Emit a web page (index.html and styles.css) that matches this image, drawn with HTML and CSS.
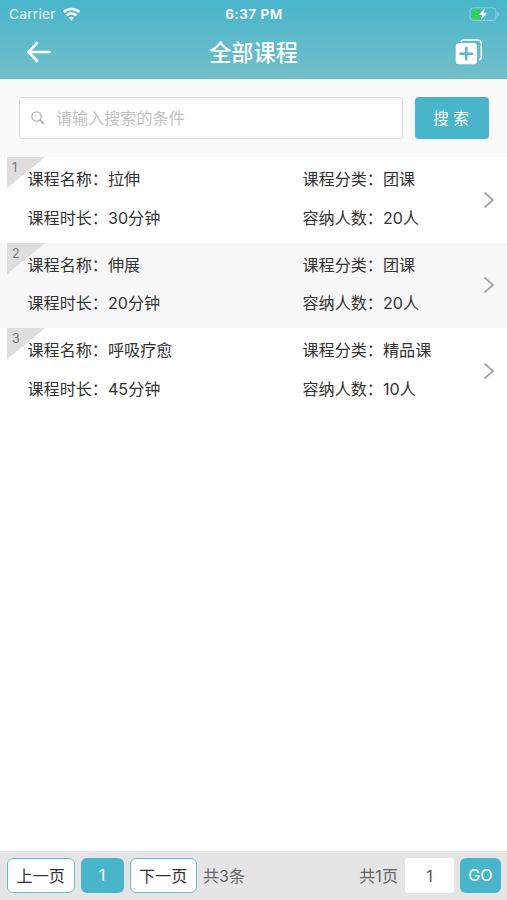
FILE: index.html
```html
<!DOCTYPE html>
<html lang="zh-CN">
<head>
    <meta charset="UTF-8">
    <meta name="viewport" content="width=device-width, initial-scale=1.0">
    <title>全部课程</title>
    <link rel="stylesheet" href="styles.css">
</head>
<body>
    <header class="header">
        <div class="status-bar">
            <div class="carrier">
                <span>Carrier</span>
                <svg width="19" height="14" viewBox="0 0 18 14" fill="none" stroke="#fff" stroke-width="2.5">
                    <path d="M1 5.2C5.5 .8 12.5 .8 17 5.2"/>
                    <path d="M4 8.4C6.8 5.7 11.2 5.7 14 8.4"/>
                    <path d="M6.3 10.8C7.8 9.4 10.2 9.4 11.7 10.8L9 13.6Z" fill="#fff" stroke="none"/>
                </svg>
            </div>
            <div class="time">6:37 PM</div>
            <svg class="battery" width="30" height="14" viewBox="0 0 30 14">
                <rect x="1" y=".8" width="26" height="12.6" rx="3.4" fill="none" stroke="#8dcfdc"/>
                <path d="M4.5 2.3H12V12H4.5Q2.5 12 2.5 10V4.3Q2.5 2.3 4.5 2.3Z" fill="#30d158"/>
                <path d="M28.5 5V9.4Q30 8.8 30 7.2T28.5 5Z" fill="#8dcfdc"/>
                <path d="M15.8 1.5L9.7 8H13.2L11.8 12.8L18 6.3H14.5Z" fill="#fff"/>
            </svg>
        </div>
        <div class="nav-bar">
            <button class="back">
                <svg width="26" height="24" viewBox="0 0 26 24" fill="none" stroke="#fff" stroke-width="2.7" stroke-linecap="round" stroke-linejoin="round">
                    <path d="M11 3L2.500 12L11 21M3 12H23.500"/>
                </svg>
            </button>
            <h1>全部课程</h1>
            <button class="add">
                <svg width="28" height="26" viewBox="0 0 28 26" fill="none">
                    <path d="M6 3Q6.500 1 9 1H22.500Q26.300 1 26.300 4.800V17.500Q26.300 20.500 24 21" stroke="#fff" stroke-width="1.500"/>
                    <rect x=".7" y="4" width="21.300" height="21.300" rx="3.500" fill="#fff"/>
                    <path d="M11.300 8V21.600M4.500 14.800H18.100" stroke="#5bb8c8" stroke-width="2.500"/>
                </svg>
            </button>
        </div>
    </header>

    <div class="search">
        <div class="search-box">
            <svg width="14" height="14" viewBox="0 0 14 14" fill="none" stroke="#b4b4b4" stroke-width="1.4">
                <circle cx="5.5" cy="5.5" r="4.6"/>
                <path d="M8.9 8.9L12.800 12.800" stroke-width="1.8"/>
            </svg>
            <input type="text" placeholder="请输入搜索的条件">
        </div>
        <button class="search-btn">搜 索</button>
    </div>

    <main class="list">
        <div class="item">
            <span class="index">1</span>
            <div class="info">
                <p>课程名称：拉伸</p>
                <p>课程分类：团课</p>
                <p>课程时长：30分钟</p>
                <p>容纳人数：20人</p>
            </div>
            <svg class="arrow" width="12" height="18" viewBox="0 0 12 18"><path d="M1.5 1.5L10 9L1.5 16.5"/></svg>
        </div>
        <div class="item">
            <span class="index">2</span>
            <div class="info">
                <p>课程名称：伸展</p>
                <p>课程分类：团课</p>
                <p>课程时长：20分钟</p>
                <p>容纳人数：20人</p>
            </div>
            <svg class="arrow" width="12" height="18" viewBox="0 0 12 18"><path d="M1.5 1.5L10 9L1.5 16.5"/></svg>
        </div>
        <div class="item">
            <span class="index">3</span>
            <div class="info">
                <p>课程名称：呼吸疗愈</p>
                <p>课程分类：精品课</p>
                <p>课程时长：45分钟</p>
                <p>容纳人数：10人</p>
            </div>
            <svg class="arrow" width="12" height="18" viewBox="0 0 12 18"><path d="M1.5 1.5L10 9L1.5 16.5"/></svg>
        </div>
    </main>

    <footer class="pager">
        <button class="page-btn">上一页</button>
        <button class="page-num">1</button>
        <button class="page-btn">下一页</button>
        <span class="total">共3条</span>
        <span class="pages">共1页</span>
        <input type="text" class="page-input" value="1">
        <button class="go">GO</button>
    </footer>
</body>
</html>
```

FILE: styles.css
```css
* {
    box-sizing: border-box;
}
body {
    margin: 0;
    height: 100vh;
    display: flex;
    flex-direction: column;
    background-color: #fff;
    color: #333;
    font-family: Inter, "Noto Sans CJK SC", sans-serif;
    font-size: 16.1px;
}
button, input {
    margin: 0;
    padding: 0;
    border: none;
    outline: none;
    font-family: inherit;
}
svg {
    display: block;
    flex-shrink: 0;
}
.header {
    height: 79px;
    background: linear-gradient(to bottom, #49b5cc, #72bfca);
    color: #fff;
}
.status-bar {
    display: grid;
    grid-template-columns: 1fr auto 1fr;
    align-items: center;
    height: 27px;
    padding: 0 8px 0 9px;
    font-size: 13.7px;
}
.carrier {
    display: flex;
    align-items: center;
    gap: 6px;
    letter-spacing: 0.25px;
    color: #e8f6f9;
}
.time {
    font-weight: 600;
    font-size: 13.6px;
    letter-spacing: 0.5px;
}
.battery {
    justify-self: end;
}
.nav-bar {
    display: flex;
    align-items: center;
    justify-content: space-between;
    height: 50px;
    padding: 0 24px 0 26px;
}
.nav-bar button {
    background: none;
}
.nav-bar h1 {
    margin: 0;
    padding-bottom: 3px;
    font-size: 22.2px;
    font-weight: 500;
}
.search {
    display: flex;
    gap: 12px;
    height: 78px;
    padding: 18px 18px 18px 19px;
    background-color: #fafafa;
}
.search-box {
    flex: 1;
    display: flex;
    align-items: center;
    gap: 11px;
    padding-left: 11px;
    border: 1px solid #dadada;
    border-radius: 3px;
    background-color: #fff;
}
.search-box input {
    flex: 1;
    min-width: 0;
    background: none;
    font-size: 16.1px;
}
.search-box input::placeholder {
    color: #c2c2c2;
}
.search-btn {
    width: 74px;
    padding: 0 2px 1px 0;
    border-radius: 4px;
    background-color: #49b5cb;
    color: #fff;
    font-size: 15.8px;
}
.list {
    flex: 1;
}
.item {
    position: relative;
    display: flex;
    align-items: center;
    height: 85.5px;
    padding: 0 12px 0 27.5px;
}
.item:nth-child(even) {
    background-color: #f7f7f7;
}
/* corner triangle with the row number */
.index {
    position: absolute;
    top: 0;
    left: 7px;
    width: 38px;
    height: 31px;
    padding-left: 5px;
    background: linear-gradient(to bottom right, #dedede 50%, transparent 50.5%);
    color: #777;
    font-size: 12.5px;
    line-height: 21px;
}
.info {
    flex: 1;
    display: grid;
    grid-template-columns: 275px 1fr;
    padding-bottom: 2px;
}
.info p {
    margin: 0;
    line-height: 38.6px;
    white-space: nowrap;
}
.arrow {
    fill: none;
    stroke: #a6a6a6;
    stroke-width: 1.8;
}
.pager {
    display: flex;
    align-items: center;
    height: 49px;
    padding: 0 6px 0 7px;
    background-color: #e5e5e5;
    color: #666;
}
.pager button {
    height: 35px;
    padding-bottom: 1px;
    border-radius: 6px;
    font-size: 16.1px;
}
.pager .page-btn {
    width: 67.5px;
    border: 1px solid #62bfd0;
    background-color: #fff;
    color: #333;
}
.pager .page-num {
    width: 43px;
    margin: 0 6px;
    background-color: #49b5cb;
    color: #fff;
}
.total,
.pages {
    padding-bottom: 2px;
}
.total {
    margin-left: 6px;
}
.pages {
    margin-left: auto;
}
.page-input {
    width: 49px;
    height: 35px;
    margin: 0 6px 0 7px;
    border-radius: 3px;
    background-color: #fff;
    color: #555;
    font-size: 16.1px;
    text-align: center;
}
.pager .go {
    width: 41px;
    background-color: #49b5cb;
    color: #fff;
}
```
